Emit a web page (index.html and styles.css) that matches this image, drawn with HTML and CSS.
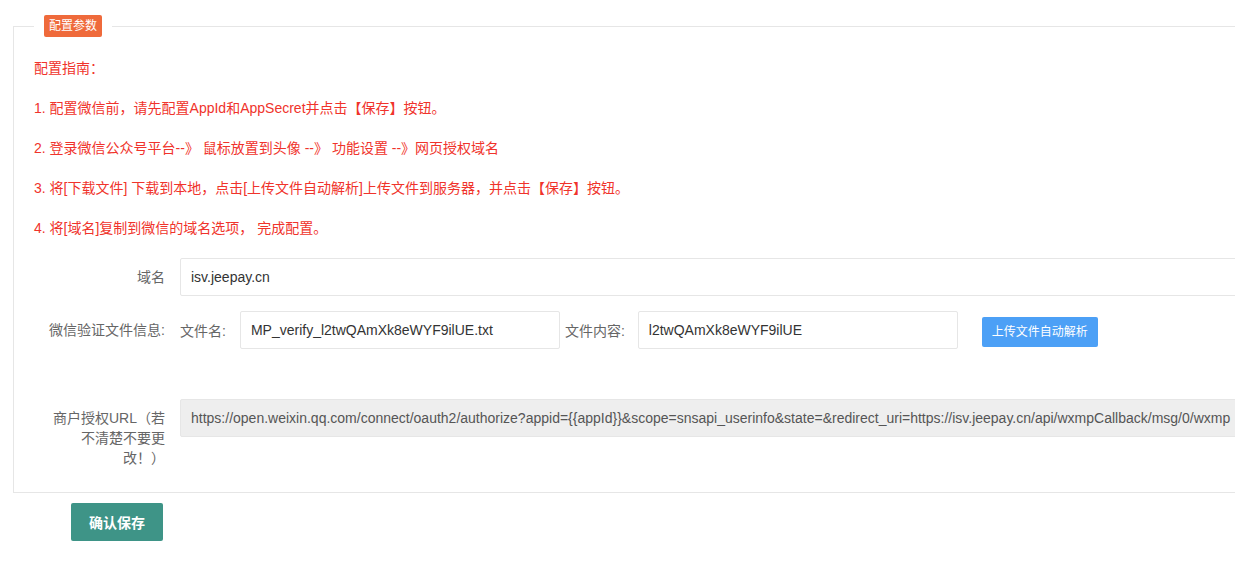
FILE: index.html
```html
<!DOCTYPE html>
<html lang="zh-CN">
<head>
<meta charset="utf-8">
<title>配置参数</title>
<link rel="stylesheet" href="styles.css">
</head>
<body>
<div class="page">
  <fieldset class="panel">
    <legend class="panel-legend"><span class="tag">配置参数</span></legend>

    <div class="guide">
      <p>配置指南：</p>
      <p>1. 配置微信前，请先配置AppId和AppSecret并点击【保存】按钮。</p>
      <p>2. 登录微信公众号平台--》 鼠标放置到头像 --》 功能设置 --》网页授权域名</p>
      <p>3. 将[下载文件] 下载到本地，点击[上传文件自动解析]上传文件到服务器，并点击【保存】按钮。</p>
      <p>4. 将[域名]复制到微信的域名选项， 完成配置。</p>
    </div>

    <div class="form">
      <div class="form-item">
        <label class="form-label">域名</label>
        <div class="form-block">
          <input class="text-input" type="text" value="isv.jeepay.cn">
        </div>
      </div>

      <div class="form-item form-item-wide">
        <label class="form-label nowrap">微信验证文件信息:</label>
        <div class="form-inline">
          <span class="inline-label">文件名:</span>
          <input class="text-input short" type="text" value="MP_verify_l2twQAmXk8eWYF9ilUE.txt">
          <span class="inline-label second">文件内容:</span>
          <input class="text-input short" type="text" value="l2twQAmXk8eWYF9ilUE">
          <button class="btn-upload" type="button"><span class="btn-upload-text">上传文件自动解析</span></button>
        </div>
      </div>

      <div class="form-item">
        <label class="form-label">商户授权URL（若不清楚不要更改！）</label>
        <div class="form-block">
          <input class="text-input disabled" type="text" readonly value="https://open.weixin.qq.com/connect/oauth2/authorize?appid={{appId}}&amp;scope=snsapi_userinfo&amp;state=&amp;redirect_uri=https://isv.jeepay.cn/api/wxmpCallback/msg/0/wxmp">
        </div>
      </div>
    </div>
  </fieldset>

  <div class="actions">
    <button class="btn-save" type="button">确认保存</button>
  </div>
</div>
</body>
</html>
```

FILE: styles.css
```css
html, body {
  margin: 0;
  padding: 0;
  overflow: hidden;
  background: #fff;
}

body {
  font-family: "Liberation Sans", "Noto Sans CJK SC", sans-serif;
  font-size: 14px;
  color: #333;
}

.page {
  width: 1400px;
  padding: 15px 0 0 13px;
}

/* outlined group with a tag in the top border */
.panel {
  margin: 0;
  padding: 0;
  min-width: 0;
  border: 1px solid #e6e6e6;
}

.panel-legend {
  margin-left: 20px;
  padding: 0 10px;
  line-height: 0;
}

.tag {
  display: inline-block;
  height: 22px;
  line-height: 22px;
  padding: 0 5px;
  font-size: 12px;
  color: #fff;
  background: #ef6a3b;
  border-radius: 2px;
}

/* red step-by-step guide */
.guide {
  padding: 21px 20px 0;
  color: #f0332b;
}

.guide p {
  margin: 0 0 20px;
  line-height: 20px;
}

/* form rows */
.form {
  padding: 0 30px 0 18px;
}

.form-item {
  display: flex;
  align-items: flex-start;
  margin-bottom: 15px;
}

.form-item-wide {
  margin-bottom: 50px;
}

.form-label {
  flex: none;
  width: 118px;
  padding: 9px 15px;
  line-height: 20px;
  text-align: right;
  color: #666;
}

.nowrap {
  white-space: nowrap;
}

.form-block {
  flex: 1;
  min-width: 0;
}

.form-inline {
  display: flex;
  align-items: center;
}

.inline-label {
  color: #666;
  margin-right: 14px;
  white-space: nowrap;
}

.inline-label.second {
  margin-left: 5px;
  margin-right: 13px;
}

.text-input {
  display: block;
  box-sizing: border-box;
  width: 100%;
  height: 38px;
  padding: 0 10px;
  border: 1px solid #e6e6e6;
  border-radius: 2px;
  background: #fff;
  font-family: inherit;
  font-size: 14px;
  color: #333;
  outline: none;
}

.text-input.short {
  width: 320px;
  flex: none;
}

.text-input.disabled {
  background: #eee;
  color: #555;
}

.btn-upload {
  flex: none;
  box-sizing: border-box;
  width: 116px;
  height: 30px;
  margin-left: 24px;
  margin-top: 3px;
  padding: 0;
  border: 0;
  border-radius: 2px;
  background: #4ca0f6;
  color: #fff;
  font-family: inherit;
  font-size: 12px;
  line-height: 30px;
  text-align: center;
  white-space: nowrap;
}

.btn-upload-text {
  font-size: 12px;
}

.actions {
  padding: 10px 0 0 58px;
}

.btn-save {
  height: 38px;
  padding: 0 18px;
  border: 0;
  border-radius: 2px;
  background: #3e9487;
  color: #fff;
  font-family: inherit;
  font-size: 14px;
  font-weight: bold;
}
```
